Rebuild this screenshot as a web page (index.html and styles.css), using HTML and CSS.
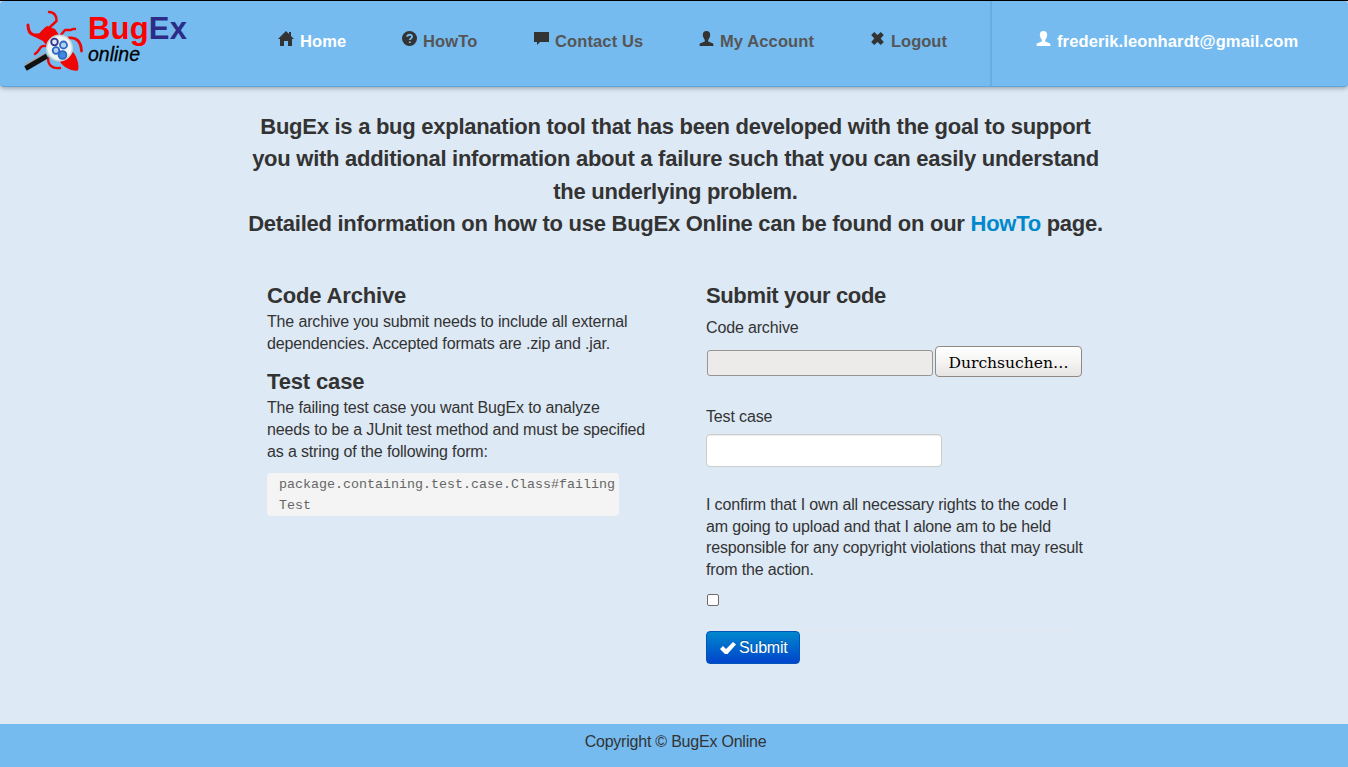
FILE: index.html
```html
<!DOCTYPE html>
<html lang="en">
<head>
<meta charset="utf-8">
<title>BugEx Online</title>
<link rel="stylesheet" href="styles.css">
</head>
<body>
<header class="navbar">
  <a class="logo" href="#" aria-label="BugEx online">
    <svg class="bug" width="66" height="70" viewBox="0 0 66 70">
      <g fill="none" stroke="#f00505" stroke-width="2.400" stroke-linecap="round" stroke-linejoin="round">
        <path d="M29 7c5 0 8 4 7.500 9l-7.500 7 4 6"/>
        <path stroke-width="3" d="M8 20c0 5 2 9 6 10h10"/>
        <path d="M55 24c-3-1-4 2-6 1h-4l-5 6"/>
        <path d="M26 41c-7-1-5 4-11 8"/>
        <path stroke-width="2.800" d="M49 33c7-1 12 3 12.500 13"/>
        <path d="M28 53c0 7 4 11 12 10"/>
      </g>
      <path fill="#f00505" d="M27 21l8 3 4 6 6 2-9 9-9 0-4-5-10-5c6 0 7-5 14-10z"/>
      <path fill="#f00505" d="M40 57l13-10c4 4 6.500 14 5 18.500-6 1-14-3-18-8.500z"/>
      <path d="M27 50L6 61.500" stroke="#9aa9b0" stroke-width="6.500"/>
      <path d="M27 51L5.500 63.500" stroke="#111" stroke-width="5"/>
      <circle cx="39.500" cy="43" r="12.800" fill="#eef5f5" stroke="#c6d5d8" stroke-width="1.500"/>
      <g stroke-width="1.800">
        <circle cx="34.500" cy="37" r="3.300" fill="#dbe7f5" stroke="#30308f"/>
        <circle cx="43.500" cy="40" r="3.500" fill="#b4d2f2" stroke="#2c68c0"/>
        <circle cx="36" cy="45.500" r="3.300" fill="#b4d2f2" stroke="#2c68c0"/>
        <circle cx="42.500" cy="50" r="3.900" fill="#3f88e0" stroke="#2c68c0"/>
      </g>
    </svg>
    <span class="wordmark"><b>Bug<i>Ex</i></b><em>online</em></span>
  </a>
  <nav class="menu">
    <a class="active home" href="#"><svg class="icon" viewBox="0 0 16 16"><path d="M8 0L0 8h2v7h4v-5h4v5h4V8h2l-3-3V1h-2v2z"/></svg><span>Home</span></a>
    <a class="howto" href="#"><svg class="icon" viewBox="0 0 16 16"><circle cx="7.500" cy="7.500" r="7.500"/><path d="M5.200 5.800C5.300 3 10.100 3 10 5.700 10 7.300 7.800 7.500 7.800 9M7.800 10.500v1.500" fill="none" stroke="#75bbef" stroke-width="1.900"/></svg><span>HowTo</span></a>
    <a class="contact" href="#"><svg class="icon" viewBox="0 0 16 16"><path d="M0 1h15v10H6l-3 3v-3H0z"/></svg><span>Contact Us</span></a>
    <a class="account" href="#"><svg class="icon" viewBox="0 0 16 16"><path d="M7.500 0C5 0 3.800 1.500 3.800 4c0 2 1 3 2 5v1.500l-5 2L.500 15h14l-.3-2.500-5-2V9c1-2 2-3 2-5 0-2.500-1.200-4-3.700-4z"/></svg><span>My Account</span></a>
    <a class="logout" href="#"><svg class="icon" viewBox="0 0 16 16"><path d="M1.200 4l3-3L7.500 4l3.300-3 3 3-3.100 3.500 3.100 3.500-3 3-3.300-3-3.300 3-3-3 3.100-3.500z"/></svg><span>Logout</span></a>
  </nav>
  <a class="user" href="#"><svg class="icon" viewBox="0 0 16 16"><path d="M7.500 0C5 0 3.800 1.500 3.800 4c0 2 1 3 2 5v1.500l-5 2L.500 15h14l-.3-2.500-5-2V9c1-2 2-3 2-5 0-2.500-1.200-4-3.700-4z"/></svg><span>frederik.leonhardt@gmail.com</span></a>
</header>
<main>
  <div class="intro">BugEx is a bug explanation tool that has been developed with the goal to support<br>you with additional information about a failure such that you can easily understand<br>the underlying problem.<br>Detailed information on how to use BugEx Online can be found on our <a href="#">HowTo</a> page.</div>
  <div class="columns">
    <section class="help">
      <h3>Code Archive</h3>
      <p>The archive you submit needs to include all external<br>dependencies. Accepted formats are .zip and .jar.</p>
      <h3>Test case</h3>
      <p>The failing test case you want BugEx to analyze<br>needs to be a JUnit test method and must be specified<br>as a string of the following form:</p>
      <code>package.containing.test.case.Class#failing<br>Test</code>
    </section>
    <form class="submit">
      <h3>Submit your code</h3>
      <label class="file-label">Code archive</label>
      <div class="file"><span class="file-name"></span><button type="button" class="browse">Durchsuchen…</button></div>
      <label class="test-label">Test case</label>
      <input class="text" type="text">
      <p class="confirm">I confirm that I own all necessary rights to the code I<br>am going to upload and that I alone am to be held<br>responsible for any copyright violations that may result<br>from the action.</p>
      <span class="check"></span>
      <div class="actions"><button type="button" class="primary"><svg viewBox="0 0 16 16"><path d="M0 9l3-3 3 3 7-7 3 2.500L7.500 14H5z"/></svg><span>Submit</span></button></div>
    </form>
  </div>
</main>
<footer><span>Copyright © BugEx Online</span></footer>
</body>
</html>
```
FILE: styles.css
```css
* { box-sizing: border-box; }
body { margin: 0; height: 767px; display: flex; flex-direction: column; background: #dde9f5; color: #333; font: 16px/21.7px "Liberation Sans", Arial, sans-serif; letter-spacing: -.15px; overflow: hidden; border-top: 1px solid #000; }
a { color: #08c; text-decoration: none; }
.navbar { display: flex; height: 86px; background: #75bbef; border-bottom: 1px solid #62a6d9; border-radius: 4px; box-shadow: 0 1px 5px rgba(0,0,0,.35); flex: none; }
.logo { display: flex; width: 278px; padding: 4px 0 0 20px; }
.bug { flex: none; }
.wordmark { display: flex; flex-direction: column; padding: 7px 0 0 2px; color: #f00; }
.wordmark b { font-size: 31px; line-height: 34px; letter-spacing: .2px; }
.wordmark i { font-style: normal; color: #2c2c86; }
.wordmark em { color: #000; font-size: 19.5px; line-height: 20px; margin-top: -2px; letter-spacing: 0; -webkit-text-stroke: .3px #000; }
.menu { display: flex; width: 714px; border-right: 2px solid #67addf; }
.menu a, .user { display: flex; align-items: flex-start; padding-top: 30px; font-size: 16.5px; font-weight: bold; letter-spacing: .12px; color: #555; }
.icon { width: 16px; height: 16px; fill: #333; flex: none; margin-right: 5px; }
.menu .active, .user { color: #fff; }
.menu .active .icon { margin-right: 6px; }
.home { width: 124px; }
.howto { width: 132px; }
.contact { width: 165px; }
.account { width: 171px; }
.menu .logout { letter-spacing: 0; }
.user { padding-left: 44px; }
.user .icon { fill: #fff; }
.intro { margin-top: 24px; padding-left: 3px; text-align: center; font-size: 22px; line-height: 32.4px; font-weight: bold; letter-spacing: -.27px; }
main { flex: 1; }
.columns { display: flex; padding: 42px 0 0 267px; }
.help { width: 439px; }
h3 { margin: 0 0 1px; font-size: 22px; line-height: 26px; letter-spacing: -.15px; }
p { margin: 0; }
.help h3 { margin-bottom: 2px; }
.help p { margin-bottom: 14px; line-height: 22px; }
code { display: block; width: 352px; height: 43px; margin-top: -4px; padding: 1px 12px; background: #f4f4f4; border-radius: 4px; color: #666; font: 13.33px/21px "Liberation Mono", monospace; letter-spacing: 0; white-space: nowrap; }
.submit { width: 380px; display: flex; flex-direction: column; align-items: flex-start; }
.submit h3 { letter-spacing: -.37px; }
.file-label { margin-top: 7px; }
.file { display: flex; align-items: center; margin-top: 8px; gap: 2px; }
.file-name { width: 226px; height: 26px; margin: 2px 0 0 1px; border: 1px solid #999590; border-radius: 3px; background: #edebe9; }
.browse { width: 147px; height: 31px; border: 1px solid #908a84; border-radius: 4px; background: linear-gradient(#fff, #f6f5f4 50%, #e6e4e2); font: 15.6px "DejaVu Serif", serif; letter-spacing: -.05px; color: #000; padding: 2px 0 0; }
.test-label { margin-top: 29px; }
.text { width: 236px; height: 33px; margin-top: 6px; border: 1px solid #ccc; border-radius: 4px; background: #fff; box-shadow: inset 0 1px 1px rgba(0,0,0,.075); }
.confirm { margin: 27px 0 0; white-space: nowrap; }
.check { width: 12px; height: 12px; margin: 13px 0 0 1px; border: 1px solid #6f6b67; border-radius: 2px; background: #fff; }
.actions { margin-top: 24px; width: 378px; border-top: 1px solid #e2e8ee; }
.primary { display: flex; align-items: center; gap: 3px; width: 94px; height: 33px; padding: 1px 0 0 13px; border: 1px solid #0055bb; border-radius: 4px; background: linear-gradient(#08c, #04c); color: #fff; font: 16px "Liberation Sans", sans-serif; letter-spacing: -.2px; text-shadow: 0 -1px 0 rgba(0,0,0,.25); }
.primary svg { width: 16px; height: 16px; fill: #fff; }
footer { height: 43px; flex: none; background: #75bbef; text-align: center; padding: 7px 0 0 3px; }
footer span { letter-spacing: -.22px; }
```
